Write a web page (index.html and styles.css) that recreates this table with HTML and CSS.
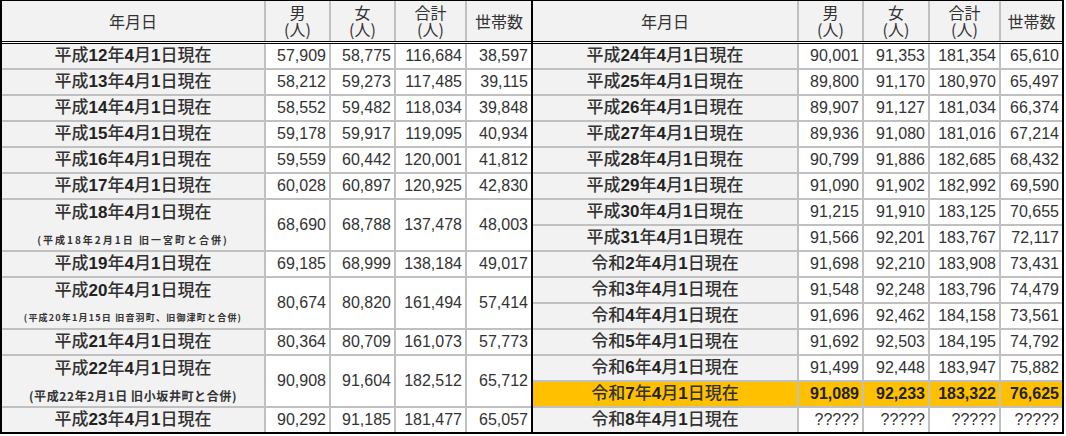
FILE: index.html
```html
<!DOCTYPE html>
<html lang="ja">
<head>
<meta charset="utf-8">
<title>人口・世帯数の推移</title>
<link rel="stylesheet" href="styles.css">
</head>
<body>
<div class="page">
  <section class="panel panel-left">
    <div class="grid grid-left head">
      <div class="hc">年月日</div>
      <div class="hc"><span>男</span><span>(人)</span></div>
      <div class="hc"><span>女</span><span>(人)</span></div>
      <div class="hc"><span>合計</span><span>(人)</span></div>
      <div class="hc">世帯数</div>
    </div>
    <div class="grid grid-left body">
      <div class="d">平成<b>12</b>年<b>4</b>月<b>1</b>日現在</div><div class="n">57,909</div><div class="n">58,775</div><div class="n">116,684</div><div class="n">38,597</div>
      <div class="d">平成<b>13</b>年<b>4</b>月<b>1</b>日現在</div><div class="n">58,212</div><div class="n">59,273</div><div class="n">117,485</div><div class="n">39,115</div>
      <div class="d">平成<b>14</b>年<b>4</b>月<b>1</b>日現在</div><div class="n">58,552</div><div class="n">59,482</div><div class="n">118,034</div><div class="n">39,848</div>
      <div class="d">平成<b>15</b>年<b>4</b>月<b>1</b>日現在</div><div class="n">59,178</div><div class="n">59,917</div><div class="n">119,095</div><div class="n">40,934</div>
      <div class="d">平成<b>16</b>年<b>4</b>月<b>1</b>日現在</div><div class="n">59,559</div><div class="n">60,442</div><div class="n">120,001</div><div class="n">41,812</div>
      <div class="d">平成<b>17</b>年<b>4</b>月<b>1</b>日現在</div><div class="n">60,028</div><div class="n">60,897</div><div class="n">120,925</div><div class="n">42,830</div>
      <div class="d tall"><div class="main">平成<b>18</b>年<b>4</b>月<b>1</b>日現在</div><div class="sub sub-a">(平成18年2月1日 旧一宮町と合併)</div></div><div class="n tall">68,690</div><div class="n tall">68,788</div><div class="n tall">137,478</div><div class="n tall">48,003</div>
      <div class="d">平成<b>19</b>年<b>4</b>月<b>1</b>日現在</div><div class="n">69,185</div><div class="n">68,999</div><div class="n">138,184</div><div class="n">49,017</div>
      <div class="d tall"><div class="main">平成<b>20</b>年<b>4</b>月<b>1</b>日現在</div><div class="sub sub-b">(平成20年1月15日 旧音羽町、旧御津町と合併)</div></div><div class="n tall">80,674</div><div class="n tall">80,820</div><div class="n tall">161,494</div><div class="n tall">57,414</div>
      <div class="d">平成<b>21</b>年<b>4</b>月<b>1</b>日現在</div><div class="n">80,364</div><div class="n">80,709</div><div class="n">161,073</div><div class="n">57,773</div>
      <div class="d tall"><div class="main">平成<b>22</b>年<b>4</b>月<b>1</b>日現在</div><div class="sub sub-c">(平成22年2月1日 旧小坂井町と合併)</div></div><div class="n tall">90,908</div><div class="n tall">91,604</div><div class="n tall">182,512</div><div class="n tall">65,712</div>
      <div class="d">平成<b>23</b>年<b>4</b>月<b>1</b>日現在</div><div class="n">90,292</div><div class="n">91,185</div><div class="n">181,477</div><div class="n">65,057</div>
    </div>
  </section>
  <section class="panel panel-right">
    <div class="grid grid-right head">
      <div class="hc">年月日</div>
      <div class="hc"><span>男</span><span>(人)</span></div>
      <div class="hc"><span>女</span><span>(人)</span></div>
      <div class="hc"><span>合計</span><span>(人)</span></div>
      <div class="hc">世帯数</div>
    </div>
    <div class="grid grid-right body">
      <div class="d">平成<b>24</b>年<b>4</b>月<b>1</b>日現在</div><div class="n">90,001</div><div class="n">91,353</div><div class="n">181,354</div><div class="n">65,610</div>
      <div class="d">平成<b>25</b>年<b>4</b>月<b>1</b>日現在</div><div class="n">89,800</div><div class="n">91,170</div><div class="n">180,970</div><div class="n">65,497</div>
      <div class="d">平成<b>26</b>年<b>4</b>月<b>1</b>日現在</div><div class="n">89,907</div><div class="n">91,127</div><div class="n">181,034</div><div class="n">66,374</div>
      <div class="d">平成<b>27</b>年<b>4</b>月<b>1</b>日現在</div><div class="n">89,936</div><div class="n">91,080</div><div class="n">181,016</div><div class="n">67,214</div>
      <div class="d">平成<b>28</b>年<b>4</b>月<b>1</b>日現在</div><div class="n">90,799</div><div class="n">91,886</div><div class="n">182,685</div><div class="n">68,432</div>
      <div class="d">平成<b>29</b>年<b>4</b>月<b>1</b>日現在</div><div class="n">91,090</div><div class="n">91,902</div><div class="n">182,992</div><div class="n">69,590</div>
      <div class="d">平成<b>30</b>年<b>4</b>月<b>1</b>日現在</div><div class="n">91,215</div><div class="n">91,910</div><div class="n">183,125</div><div class="n">70,655</div>
      <div class="d">平成<b>31</b>年<b>4</b>月<b>1</b>日現在</div><div class="n">91,566</div><div class="n">92,201</div><div class="n">183,767</div><div class="n">72,117</div>
      <div class="d">令和<b>2</b>年<b>4</b>月<b>1</b>日現在</div><div class="n">91,698</div><div class="n">92,210</div><div class="n">183,908</div><div class="n">73,431</div>
      <div class="d">令和<b>3</b>年<b>4</b>月<b>1</b>日現在</div><div class="n">91,548</div><div class="n">92,248</div><div class="n">183,796</div><div class="n">74,479</div>
      <div class="d">令和<b>4</b>年<b>4</b>月<b>1</b>日現在</div><div class="n">91,696</div><div class="n">92,462</div><div class="n">184,158</div><div class="n">73,561</div>
      <div class="d">令和<b>5</b>年<b>4</b>月<b>1</b>日現在</div><div class="n">91,692</div><div class="n">92,503</div><div class="n">184,195</div><div class="n">74,792</div>
      <div class="d">令和<b>6</b>年<b>4</b>月<b>1</b>日現在</div><div class="n">91,499</div><div class="n">92,448</div><div class="n">183,947</div><div class="n">75,882</div>
      <div class="d hl">令和<b>7</b>年<b>4</b>月<b>1</b>日現在</div><div class="n hl">91,089</div><div class="n hl">92,233</div><div class="n hl">183,322</div><div class="n hl">76,625</div>
      <div class="d">令和<b>8</b>年<b>4</b>月<b>1</b>日現在</div><div class="n">?????</div><div class="n">?????</div><div class="n">?????</div><div class="n">?????</div>
    </div>
  </section>
</div>
</body>
</html>
```

FILE: styles.css
```css
* {
  box-sizing: border-box;
}

html, body {
  margin: 0;
  padding: 0;
  background: #ffffff;
}

body {
  font-family: "Liberation Sans", "Noto Sans CJK JP", sans-serif;
  color: #333333;
}

.page {
  display: flex;
  align-items: flex-start;
}

.panel {
  display: flex;
  flex-direction: column;
  border-top: 1px solid #000;
  border-bottom: 2px solid #000;
  border-right: 2px solid #000;
}

.panel-left {
  border-left: 2px solid #000;
}

.grid {
  display: grid;
  gap: 2px;
  background: #c0c0c0;
}

.grid-left {
  grid-template-columns: 262px 63px 63px 69px 64px;
}

.grid-right {
  grid-template-columns: 264px 63px 64px 69px 61px;
}

.head {
  grid-template-rows: 40px;
  border-bottom: 3px double #000;
  background-clip: padding-box;
}

.body {
  grid-auto-rows: 24px;
}

.hc {
  background: #f2f2f2;
  display: flex;
  flex-direction: column;
  align-items: center;
  justify-content: center;
  text-align: center;
  font-family: "Noto Sans CJK JP", sans-serif;
  font-size: 16px;
  line-height: 17px;
  color: #333;
}

.hc span {
  display: block;
  height: 17px;
  line-height: 17px;
  overflow: visible;
}

.d {
  background: #f2f2f2;
  text-align: center;
  font-family: "Liberation Sans", "Noto Sans CJK JP", sans-serif;
  font-size: 17px;
  line-height: 24px;
  font-weight: 500;
  color: #333;
  white-space: nowrap;
}

.d b {
  font-weight: bold;
  color: #222;
}

.n {
  background: #ffffff;
  text-align: right;
  padding-right: 3px;
  font-size: 16px;
  line-height: 24px;
  color: #333;
  white-space: nowrap;
}

.tall {
  grid-row: span 2;
}

.n.tall {
  display: flex;
  align-items: center;
  justify-content: flex-end;
}

.d.tall {
  display: flex;
  flex-direction: column;
  align-items: center;
}

.main {
  height: 26px;
  line-height: 26px;
}

.sub {
  font-family: "Noto Sans CJK JP", sans-serif;
  font-weight: bold;
  color: #333;
  height: 24px;
  display: flex;
  align-items: center;
  padding-top: 3px;
}

.sub-a {
  font-size: 10px;
  letter-spacing: 2px;
}

.sub-b {
  font-size: 9px;
  letter-spacing: 1.2px;
}

.sub-c {
  font-size: 12px;
  letter-spacing: 0.6px;
}

.hl {
  background: #ffc000;
}

.n.hl {
  font-weight: bold;
  color: #222;
}
```
